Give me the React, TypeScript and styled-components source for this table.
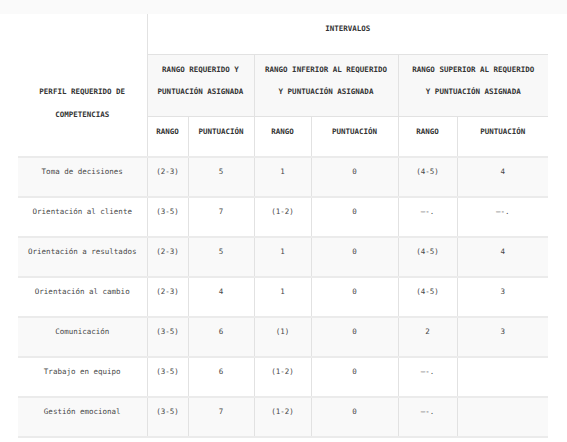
import { createGlobalStyle, styled } from 'styled-components';

const GlobalStyle = createGlobalStyle`
  html, body {
    margin: 0;
    padding: 0;
    background: #ffffff;
  }
  body {
    font-family: "DejaVu Sans Mono", "Liberation Mono", monospace;
  }
`;

interface Row {
  name: string;
  req: [string, string];
  low: [string, string];
  high: [string, string];
}

const DASH = '—-.';

const rows: Row[] = [
  { name: 'Toma de decisiones', req: ['(2-3)', '5'], low: ['1', '0'], high: ['(4-5)', '4'] },
  { name: 'Orientación al cliente', req: ['(3-5)', '7'], low: ['(1-2)', '0'], high: [DASH, DASH] },
  { name: 'Orientación a resultados', req: ['(2-3)', '5'], low: ['1', '0'], high: ['(4-5)', '4'] },
  { name: 'Orientación al cambio', req: ['(2-3)', '4'], low: ['1', '0'], high: ['(4-5)', '3'] },
  { name: 'Comunicación', req: ['(3-5)', '6'], low: ['(1)', '0'], high: ['2', '3'] },
  { name: 'Trabajo en equipo', req: ['(3-5)', '6'], low: ['(1-2)', '0'], high: [DASH, ''] },
  { name: 'Gestión emocional', req: ['(3-5)', '7'], low: ['(1-2)', '0'], high: [DASH, ''] },
];

const widths = [129, 41, 66, 57, 87, 59, 91];

export default function App() {
  return (
    <Page>
      <GlobalStyle />
      <TopStrip />
      <Table>
        <colgroup>
          {widths.map((w, i) => (
            <col key={i} style={{ width: w }} />
          ))}
        </colgroup>
        <thead>
          <tr>
            <ProfileHead rowSpan={3}>
              PERFIL REQUERIDO DE
              <br />
              COMPETENCIAS
            </ProfileHead>
            <HeadCell colSpan={6}>INTERVALOS</HeadCell>
          </tr>
          <tr>
            <GroupCell colSpan={2}>
              RANGO REQUERIDO Y
              <br />
              PUNTUACIÓN ASIGNADA
            </GroupCell>
            <GroupCell colSpan={2}>
              RANGO INFERIOR AL REQUERIDO
              <br />Y PUNTUACIÓN ASIGNADA
            </GroupCell>
            <GroupCell colSpan={2}>
              RANGO SUPERIOR AL REQUERIDO
              <br />Y PUNTUACIÓN ASIGNADA
            </GroupCell>
          </tr>
          <tr>
            <SubHeadCell>RANGO</SubHeadCell>
            <SubHeadCell>PUNTUACIÓN</SubHeadCell>
            <SubHeadCell>RANGO</SubHeadCell>
            <SubHeadCell>PUNTUACIÓN</SubHeadCell>
            <SubHeadCell>RANGO</SubHeadCell>
            <SubHeadCell>PUNTUACIÓN</SubHeadCell>
          </tr>
        </thead>
        <tbody>
          {rows.map((r, i) => (
            <BodyRow key={r.name} $striped={i % 2 === 0}>
              <Cell>{r.name}</Cell>
              <Cell>{r.req[0]}</Cell>
              <Cell>{r.req[1]}</Cell>
              <Cell>{r.low[0]}</Cell>
              <Cell>{r.low[1]}</Cell>
              <Cell>{r.high[0]}</Cell>
              <Cell>{r.high[1]}</Cell>
            </BodyRow>
          ))}
        </tbody>
      </Table>
    </Page>
  );
}

const Page = styled.div`
  width: 567px;
  min-height: 442px;
  background: #ffffff;
`;

const TopStrip = styled.div`
  height: 14px;
  background: #fafafa;
`;

const Table = styled.table`
  margin-left: 18px;
  width: 530px;
  table-layout: fixed;
  border-collapse: collapse;
  border-spacing: 0;
  font-size: 7.5px;
`;

const HeadCell = styled.th`
  height: 40px;
  box-sizing: border-box;
  padding: 4px 4px 0;
  line-height: 22px;
  vertical-align: top;
  text-align: center;
  font-weight: 600;
  color: #333333;
  white-space: nowrap;
  background: #ffffff;
  border-left: 1px solid #e2e2e2;
  border-bottom: 1px solid #e2e2e2;
`;

const GroupCell = styled(HeadCell)`
  height: 62px;
  background: #f8f8f8;
`;

const SubHeadCell = styled(HeadCell)`
  height: 41px;
`;

const ProfileHead = styled.th`
  box-sizing: border-box;
  padding: 66px 4px 0;
  line-height: 23px;
  vertical-align: top;
  text-align: center;
  font-weight: 600;
  color: #333333;
  background: #ffffff;
`;

const BodyRow = styled.tr<{ $striped: boolean }>`
  background: ${(p) => (p.$striped ? '#f9f9f9' : '#ffffff')};
  border-top: 2px solid #ebebeb;

  &:last-child {
    border-bottom: 2px solid #ebebeb;
  }
`;

const Cell = styled.td`
  height: 40px;
  box-sizing: border-box;
  padding: 9px 4px 0;
  line-height: 9px;
  vertical-align: top;
  text-align: center;
  color: #474747;
  white-space: nowrap;
  & + & {
    border-left: 1px solid #e2e2e2;
  }
`;
